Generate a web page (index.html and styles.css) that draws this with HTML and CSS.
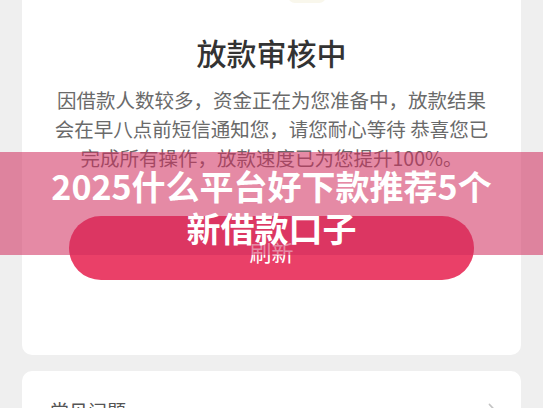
FILE: index.html
```html
<!DOCTYPE html>
<html lang="zh-CN">
  <head>
    <meta charset="utf-8">
    <title>放款审核中</title>
    <link rel="stylesheet" href="styles.css">
  </head>
  <body>
    <div class="page">
      <div class="card status">
        <div class="status-icon"></div>
        <h1 class="status-title">放款审核中</h1>
        <p class="status-text">因借款人数较多，资金正在为您准备中，放款结果会在早八点前短信通知您，请您耐心等待 恭喜您已完成所有操作，放款速度已为您提升100%。</p>
        <button class="refresh">刷新</button>
      </div>

      <div class="card faq">
        <span class="faq-title">常见问题</span>
        <svg class="chevron" width="9" height="16" viewBox="0 0 9 16">
          <path d="M1.5 1.5 L7.5 8 L1.5 14.5" fill="none" stroke="#c4c4c4" stroke-width="1.8" stroke-linecap="round"/>
        </svg>
      </div>
    </div>

    <!-- headline band laid over the page -->
    <div class="banner">2025什么平台好下款推荐5个新借款口子</div>
  </body>
</html>
```

FILE: styles.css
```css
* {
  box-sizing: border-box;
}
body {
  margin: 0;
  background-color: #efefef;
  font-family: "Noto Sans CJK SC", "Noto Sans", sans-serif;
  overflow: hidden;
}
.page {
  padding: 0 22px;
}
.card {
  background-color: #ffffff;
  border-radius: 10px;
}
.status {
  margin-top: -26px;
  padding: 22px 30px 75px;
  text-align: center;
}
.status-icon {
  width: 38px;
  height: 7px;
  margin: 0 auto;
  position: relative;
  left: 35px;
  border-radius: 0 0 20px 20px;
  background-color: #f9f7ec;
}
.status-title {
  margin: 29px 0 0;
  font-size: 30px;
  line-height: 40px;
  font-weight: 500;
  color: #333333;
}
.status-text {
  margin: 13px 0 0;
  font-size: 19.5px;
  line-height: 29px;
  color: #6a6a6a;
}
.refresh {
  display: block;
  width: 405px;
  height: 64px;
  margin: 44px auto 0;
  padding-top: 6px;
  border: none;
  border-radius: 32px;
  background-color: #ea4068;
  color: #ffffff;
  font-family: inherit;
  font-size: 22px;
}
.faq {
  margin-top: 16px;
  padding: 27px 24px 27px 28px;
  display: flex;
  align-items: center;
  justify-content: space-between;
}
.faq-title {
  font-size: 19px;
  line-height: 26px;
  color: #555555;
}
.banner {
  position: absolute;
  top: 152px;
  left: 0;
  width: 100%;
  height: 103px;
  padding: 13px 45px 0;
  background-color: rgba(208, 46, 94, 0.56);
  color: #ffffff;
  font-size: 34px;
  line-height: 42px;
  font-weight: 700;
  text-align: center;
}
```
